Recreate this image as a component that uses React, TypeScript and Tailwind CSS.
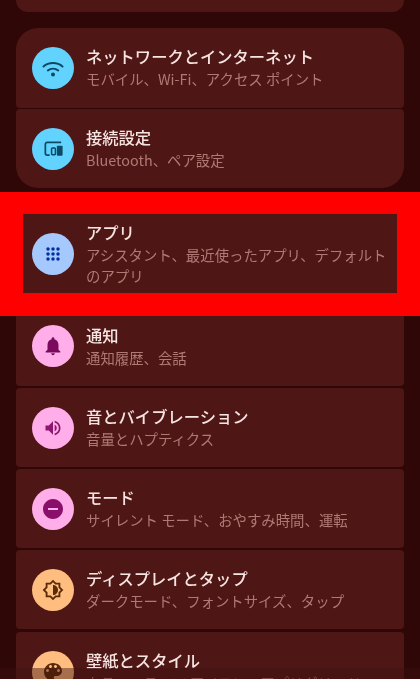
import React from 'react';

const FONT = '"Noto Sans CJK JP", "Noto Sans", sans-serif';

// icon shapes, 24x24 material style
const icons = {
  wifi: (
    <>
      <path d="M2.5 10.5c5.2-4.6 13.8-4.6 19 0" fill="none" stroke="currentColor" strokeWidth="2" strokeLinecap="round" />
      <path d="M6.8 14.5c3-2.4 7.4-2.4 10.4 0" fill="none" stroke="currentColor" strokeWidth="2" strokeLinecap="round" />
      <circle cx="12" cy="18.5" r="2" fill="currentColor" />
    </>
  ),
  devices: (
    <>
      <path d="M20 5.5H5.5a2 2 0 0 0-2 2V17a2 2 0 0 0 2 2H8" fill="none" stroke="currentColor" strokeWidth="1.8" />
      <rect x="10" y="11.5" width="4" height="7" rx="1" fill="none" stroke="currentColor" strokeWidth="1.6" />
      <rect x="15.5" y="9" width="6" height="10.5" rx="1" fill="currentColor" />
    </>
  ),
  apps: (
    <>
      {[6, 12, 18].map((y) =>
        [6, 12, 18].map((x) => <circle key={`${x}-${y}`} cx={x} cy={y} r="2.1" fill="currentColor" />)
      )}
    </>
  ),
  bell: <path fill="currentColor" d="M12 22c1.1 0 2-.9 2-2h-4c0 1.1.9 2 2 2zm6-6v-5c0-3.07-1.63-5.64-4.5-6.32V4c0-.83-.67-1.5-1.5-1.5s-1.5.67-1.5 1.5v.68C7.64 5.36 6 7.92 6 11v5l-2 2v1h16v-1l-2-2z" />,
  sound: <path fill="currentColor" d="M3 9v6h4l5 5V4L7 9H3zm13.5 3c0-1.77-1.02-3.29-2.5-4.03v8.05c1.48-.73 2.5-2.25 2.5-4.02zM14 3.23v2.06c2.89.86 5 3.54 5 6.71s-2.11 5.85-5 6.71v2.06c4.01-.91 7-4.49 7-8.77s-2.99-7.86-7-8.77z" />,
  mode: <path fill="currentColor" d="M12 2C6.48 2 2 6.48 2 12s4.48 10 10 10 10-4.48 10-10S17.52 2 12 2zm5 11H7v-2h10v2z" />,
  display: <path fill="currentColor" d="M20 8.69V4h-4.69L12 .69 8.69 4H4v4.69L.69 12 4 15.31V20h4.69L12 23.31 15.31 20H20v-4.69L23.31 12 20 8.69zm-2 5.79V18h-3.52L12 20.48 9.52 18H6v-3.52L3.52 12 6 9.52V6h3.52L12 3.52 14.48 6H18v3.52L20.48 12 18 14.48zM12 6.5v11c3.03 0 5.5-2.47 5.5-5.5S15.03 6.5 12 6.5z" />,
  palette: <path fill="currentColor" d="M12 3c-4.97 0-9 4.03-9 9s4.03 9 9 9c.83 0 1.5-.67 1.5-1.5 0-.39-.15-.74-.39-1.01-.23-.26-.38-.61-.38-.99 0-.83.67-1.5 1.5-1.5H16c2.76 0 5-2.24 5-5 0-4.42-4.03-8-9-8zm-5.5 9c-.83 0-1.5-.67-1.5-1.5S5.67 9 6.5 9 8 9.67 8 10.5 7.33 12 6.5 12zm3-4C8.67 8 8 7.33 8 6.5S8.67 5 9.5 5s1.5.67 1.5 1.5S10.33 8 9.5 8zm5 0c-.83 0-1.5-.67-1.5-1.5S13.67 5 14.5 5s1.5.67 1.5 1.5S15.33 8 14.5 8zm3 4c-.83 0-1.5-.67-1.5-1.5S16.67 9 17.5 9s1.5.67 1.5 1.5-.67 1.5-1.5 1.5z" />,
};

const Row = ({ icon, circle, size = 'w-6 h-6', title, sub, className, textClass = '-translate-y-px' }) => (
  <div className={`flex items-center bg-[#4f1616] pl-4 pr-[18px] ${className}`}>
    <div className={`flex w-[42px] h-[42px] shrink-0 items-center justify-center rounded-full ${circle}`}>
      <svg viewBox="0 0 24 24" className={size}>{icons[icon]}</svg>
    </div>
    <div className={`ml-3 min-w-0 flex-1 ${textClass}`}>
      <div className="text-[16.3px] leading-[23px] font-medium text-[#f6e4e1]">{title}</div>
      <div className="text-[14.4px] leading-[21px] text-[#b07a74]">{sub}</div>
    </div>
  </div>
);

export default function App() {
  return (
    <div className="relative h-[679px] w-[420px] overflow-hidden bg-[#2f0707] blur-[0.6px]" style={{ fontFamily: FONT }}>
      <div className="flex flex-col px-4">
        <div className="h-3 rounded-b-[22px] bg-[#4f1616]" />

        <Row
          className="mt-4 h-20 rounded-t-[22px] rounded-b-[4px]"
          icon="wifi"
          size="w-[24px] h-[24px]"
          circle="bg-[#62d3ff] text-[#0b4a63]"
          title="ネットワークとインターネット"
          sub="モバイル、Wi-Fi、アクセス ポイント"
        />
        <Row
          className="mt-px h-[79px] rounded-t-[4px] rounded-b-[22px]"
          icon="devices"
          size="w-[23px] h-[23px]"
          circle="bg-[#62d3ff] text-[#0b4a63]"
          title="接続設定"
          sub="Bluetooth、ペア設定"
        />

        {/* red highlight round the apps row */}
        <div className="-mx-4 mt-1 box-border h-[124px] border-x-[23px] border-t-[22px] border-b-[23px] border-[#ff0000] bg-[#4f1616]">
          <Row
            className="-ml-[7px] h-[79px] !bg-transparent !pr-[7px]"
            icon="apps"
            size="w-5 h-5"
            circle="bg-[#a5c8ff] text-[#00319a]"
            title="アプリ"
            sub="アシスタント、最近使ったアプリ、デフォルトのアプリ"
            textClass="translate-y-0"
          />
        </div>

        <Row
          className="h-[70px] rounded-b-[4px] pb-2.5"
          icon="bell"
          size="w-[22px] h-[22px]"
          circle="bg-[#ffaeea] text-[#7a0b5c]"
          title="通知"
          sub="通知履歴、会話"
          textClass="translate-y-0"
        />
        <Row
          className="mt-0.5 h-[79px] rounded-[4px]"
          icon="sound"
          size="w-5 h-5"
          circle="bg-[#ffaeea] text-[#8d1670]"
          title="音とバイブレーション"
          sub="音量とハプティクス"
        />
        <Row
          className="mt-0.5 h-[79px] rounded-[4px]"
          icon="mode"
          circle="bg-[#ffaeea] text-[#8a0f6b]"
          title="モード"
          sub="サイレント モード、おやすみ時間、運転"
        />
        <Row
          className="mt-0.5 h-[79px] rounded-[4px]"
          icon="display"
          size="w-[22px] h-[22px]"
          circle="bg-[#ffbd80] text-[#5a2b05]"
          title="ディスプレイとタップ"
          sub="ダークモード、フォントサイズ、タップ"
        />
        <Row
          className="mt-[3px] h-[79px] shrink-0 rounded-t-[4px]"
          icon="palette"
          circle="bg-[#ffbd80] text-[#5a2b05]"
          title="壁紙とスタイル"
          sub="カラー、テーマ アイコン、アプリグリッド"
        />
      </div>

      {/* dim strip at the bottom edge */}
      <div className="absolute inset-x-0 bottom-0 h-[11px] bg-[#3f1010]/45" />
    </div>
  );
}
